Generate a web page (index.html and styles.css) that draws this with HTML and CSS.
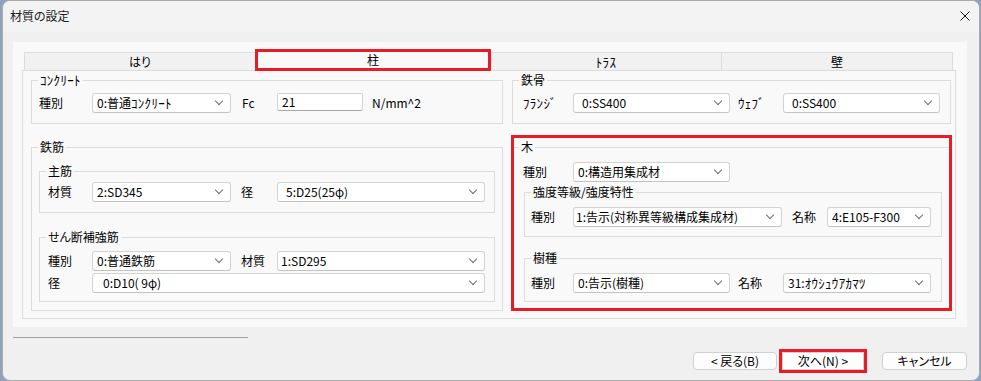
FILE: index.html
```html
<!DOCTYPE html>
<html>
    <head>
        <title>材質の設定</title>
        <meta charset="UTF-8">
        <link rel="stylesheet" href="styles.css">
    </head>
    <body>
        <div class="window">
            <div class="titlebar">
                <span class="title">材質の設定</span>
                <svg class="close" width="10" height="10" viewBox="0 0 10 10">
                    <path d="M0.5 0.5L9.5 9.5M9.5 0.5L0.5 9.5" stroke="#1b1b1b" stroke-width="1"/>
                </svg>
            </div>

            <div class="client">
                <div class="panel">
                    <!-- タブ -->
                    <div class="tabs">
                        <div class="tab">はり</div>
                        <div class="tab active">柱</div>
                        <div class="tab"><span class="hw">ﾄﾗｽ</span></div>
                        <div class="tab">壁</div>
                    </div>

                    <div class="page">
                        <fieldset class="grp concrete">
                            <legend><span class="hw">ｺﾝｸﾘｰﾄ</span></legend>
                            <div class="row">
                                <span class="lbl w53">種別</span>
                                <div class="combo w139"><span>0:普通<span class="hw">ｺﾝｸﾘｰﾄ</span></span></div>
                                <span class="lbl ml11 w35">Fc</span>
                                <div class="textbox">21</div>
                                <span class="lbl ml9">N/mm^2</span>
                            </div>
                        </fieldset>

                        <fieldset class="grp steel">
                            <legend>鉄骨</legend>
                            <div class="row">
                                <span class="lbl w50"><span class="hw">ﾌﾗﾝｼﾞ</span></span>
                                <div class="combo w157 p8"><span>0:SS400</span></div>
                                <span class="lbl ml8 w45"><span class="hw">ｳｪﾌﾞ</span></span>
                                <div class="combo w157 p8"><span>0:SS400</span></div>
                            </div>
                        </fieldset>

                        <fieldset class="grp rebar">
                            <legend>鉄筋</legend>
                            <fieldset class="grp main">
                                <legend>主筋</legend>
                                <div class="row">
                                    <span class="lbl w44">材質</span>
                                    <div class="combo w139"><span>2:SD345</span></div>
                                    <span class="lbl ml10 w36">径</span>
                                    <div class="combo w208 p8"><span>5:D25(25φ)</span></div>
                                </div>
                            </fieldset>
                            <fieldset class="grp shear">
                                <legend>せん断補強筋</legend>
                                <div class="row">
                                    <span class="lbl w44">種別</span>
                                    <div class="combo w139"><span>0:普通鉄筋</span></div>
                                    <span class="lbl ml10 w36">材質</span>
                                    <div class="combo w208 p3"><span>1:SD295</span></div>
                                </div>
                                <div class="row">
                                    <span class="lbl w44">径</span>
                                    <div class="combo grow p10"><span>0:D10(&nbsp;9φ)</span></div>
                                </div>
                            </fieldset>
                        </fieldset>

                        <div class="wood-wrap">
                            <fieldset class="grp wood">
                                <legend>木</legend>
                                <div class="row">
                                    <span class="lbl w50">種別</span>
                                    <div class="combo w157"><span>0:構造用集成材</span></div>
                                </div>
                                <fieldset class="grp grade">
                                    <legend>強度等級/強度特性</legend>
                                    <div class="row">
                                        <span class="lbl w42">種別</span>
                                        <div class="combo w209 p2"><span>1:告示(対称異等級構成集成材)</span></div>
                                        <span class="lbl ml10 w35">名称</span>
                                        <div class="combo w104"><span>4:E105-F300</span></div>
                                    </div>
                                </fieldset>
                                <fieldset class="grp species">
                                    <legend>樹種</legend>
                                    <div class="row">
                                        <span class="lbl w42">種別</span>
                                        <div class="combo w157"><span>0:告示(樹種)</span></div>
                                        <span class="lbl ml8 w45">名称</span>
                                        <div class="combo w148"><span>31:<span class="hw">ｵｳｼｭｳｱｶﾏﾂ</span></span></div>
                                    </div>
                                </fieldset>
                            </fieldset>
                            <span class="mark"></span>
                        </div>
                    </div>
                </div>

                <div class="sep"></div>

                <div class="buttons">
                    <button class="btn back">&lt; 戻る(B)</button>
                    <button class="btn next">次へ(N) &gt;</button>
                    <button class="btn cancel">キャンセル</button>
                </div>
            </div>
        </div>
    </body>
</html>
```

FILE: styles.css
```css
* {
    box-sizing: border-box;
}

body {
    margin: 0;
    background: #8ea1bd;
    font-family: "Noto Sans CJK JP", "Noto Sans", sans-serif;
    font-size: 12px;
    color: #000;
    font-feature-settings: "palt";
}

/* 半角カナ: プロポーショナルにせず少し大きく */
.hw {
    font-size: 13px;
    font-feature-settings: normal;
    letter-spacing: 0.3px;
}

.window {
    margin-left: 2px;
    width: 978px;
    height: 381px;
    border: 1px solid #ababab;
    border-radius: 8px;
    background: #f0f0f0;
    overflow: hidden;
}

.titlebar {
    height: 31px;
    background: #f3f3f3;
    display: flex;
    align-items: center;
    justify-content: space-between;
    padding: 0 9px 2px 7px;
    color: #1b1b1b;
}

.client {
    padding: 10px 12px 0 10px;
}

.panel {
    background: #f9f9f9;
    padding: 10px 11px 8px 9px;
}

/* タブ */
.tabs {
    display: flex;
    height: 18px;
    margin: 0 3px 0 2px;
}

.tab {
    flex: 1;
    border: 1px solid #dcdcdc;
    border-bottom: none;
    margin-left: -1px;
    background: #f1f1f1;
    text-align: center;
    line-height: 17px;
}

.tab:first-child {
    margin-left: 0;
}

.tab.active {
    flex: 0 0 236px;
    height: 22px;
    margin-top: -3px;
    line-height: 20px;
    background: #f9f9f9;
    position: relative;
    z-index: 1;
    outline: 3px solid #e81c24;
    outline-offset: -3px;
}

.page {
    border: 1px solid #dcdcdc;
    background: #f9f9f9;
    padding: 2px 4px 7px 8px;
    display: grid;
    grid-template-columns: 472px 439px;
    column-gap: 9px;
    row-gap: 16px;
    align-items: start;
}

/* グループ枠 */
fieldset {
    margin: 0;
    min-width: 0;
    border: 1px solid #dcdcdc;
}

legend {
    padding: 0 2px;
    line-height: 14px;
}

.concrete {
    padding: 6px 0 10px 6px;
}

.concrete .row {
    padding-left: 1px;
}

.steel {
    padding: 6px 0 10px 6px;
}

.steel .row,
.wood > .row {
    padding-left: 4px;
}

.rebar {
    padding: 10px 7px 8px 6px;
}

.rebar > fieldset {
    margin-left: 1px;
}

.main {
    padding: 4px 9px 10px 6px;
}

.main .row,
.shear .row {
    padding-left: 2px;
}

.shear {
    margin-top: 17px;
    padding: 7px 9px 8px 6px;
}

.shear .row + .row {
    margin-top: 2px;
}

.wood-wrap {
    position: relative;
    display: grid;
}

.wood {
    padding: 8px 8px 8px 6px;
}

.wood > fieldset {
    margin-left: 5px;
}

.grade {
    margin-top: 3px;
    padding: 8px 0 9px 6px;
}

.species {
    margin-top: 14px;
    padding: 8px 0 8px 6px;
}

.mark {
    position: absolute;
    top: -5px;
    left: -1px;
    right: -1px;
    bottom: 0;
    border: 3px solid #e81c24;
    pointer-events: none;
}

/* 行とコントロール */
.row {
    display: flex;
    align-items: center;
    height: 20px;
    white-space: nowrap;
}

.lbl {
    flex: none;
    line-height: 14px;
}

.w35 { width: 35px; }
.w36 { width: 36px; }
.w42 { width: 42px; }
.w44 { width: 44px; }
.w45 { width: 45px; }
.w50 { width: 50px; }
.w53 { width: 53px; }
.ml8 { margin-left: 8px; }
.ml9 { margin-left: 9px; }
.ml10 { margin-left: 10px; }
.ml11 { margin-left: 11px; }

.combo {
    flex: none;
    display: flex;
    align-items: center;
    justify-content: space-between;
    height: 20px;
    padding: 0 8px 0 4px;
    line-height: 14px;
    background: #fff;
    border: 1px solid #d3d3d3;
    border-bottom-color: #c3c3c3;
    border-radius: 3px;
    overflow: hidden;
}

.combo::after {
    content: "";
    flex: none;
    width: 5px;
    height: 5px;
    margin-top: -4px;
    border-right: 1px solid #6e6e6e;
    border-bottom: 1px solid #6e6e6e;
    transform: rotate(45deg);
}

.combo.w104 { width: 104px; }
.combo.w139 { width: 139px; }
.combo.w148 { width: 148px; }
.combo.w157 { width: 157px; }
.combo.w208 { width: 208px; }
.combo.w209 { width: 209px; }
.combo.grow { flex: 1; }
.combo.p2 { padding-left: 2px; }
.combo.p3 { padding-left: 3px; }
.combo.p8 { padding-left: 8px; }
.combo.p10 { padding-left: 10px; }

.textbox {
    flex: none;
    width: 86px;
    height: 18px;
    margin-top: -2px;
    padding-left: 4px;
    line-height: 16px;
    background: #fff;
    border: 1px solid #d3d3d3;
    border-bottom-color: #a8a8a8;
    border-radius: 2px;
}

/* 下部 */
.sep {
    width: 235px;
    margin-top: 10px;
    border-top: 1px solid #a0a0a0;
}

.buttons {
    display: flex;
    justify-content: flex-end;
    margin-top: 14px;
}

.btn {
    height: 18px;
    padding: 0;
    font: inherit;
    color: #000;
    background: #fdfdfd;
    border: 1px solid #d0d0d0;
    border-radius: 4px;
    line-height: 16px;
}

.back { width: 84px; }

.next {
    width: 82px;
    margin-left: 5px;
    border-radius: 0;
    outline: 3px solid #e81c24;
}

.cancel {
    width: 85px;
    margin-left: 18px;
}
```
